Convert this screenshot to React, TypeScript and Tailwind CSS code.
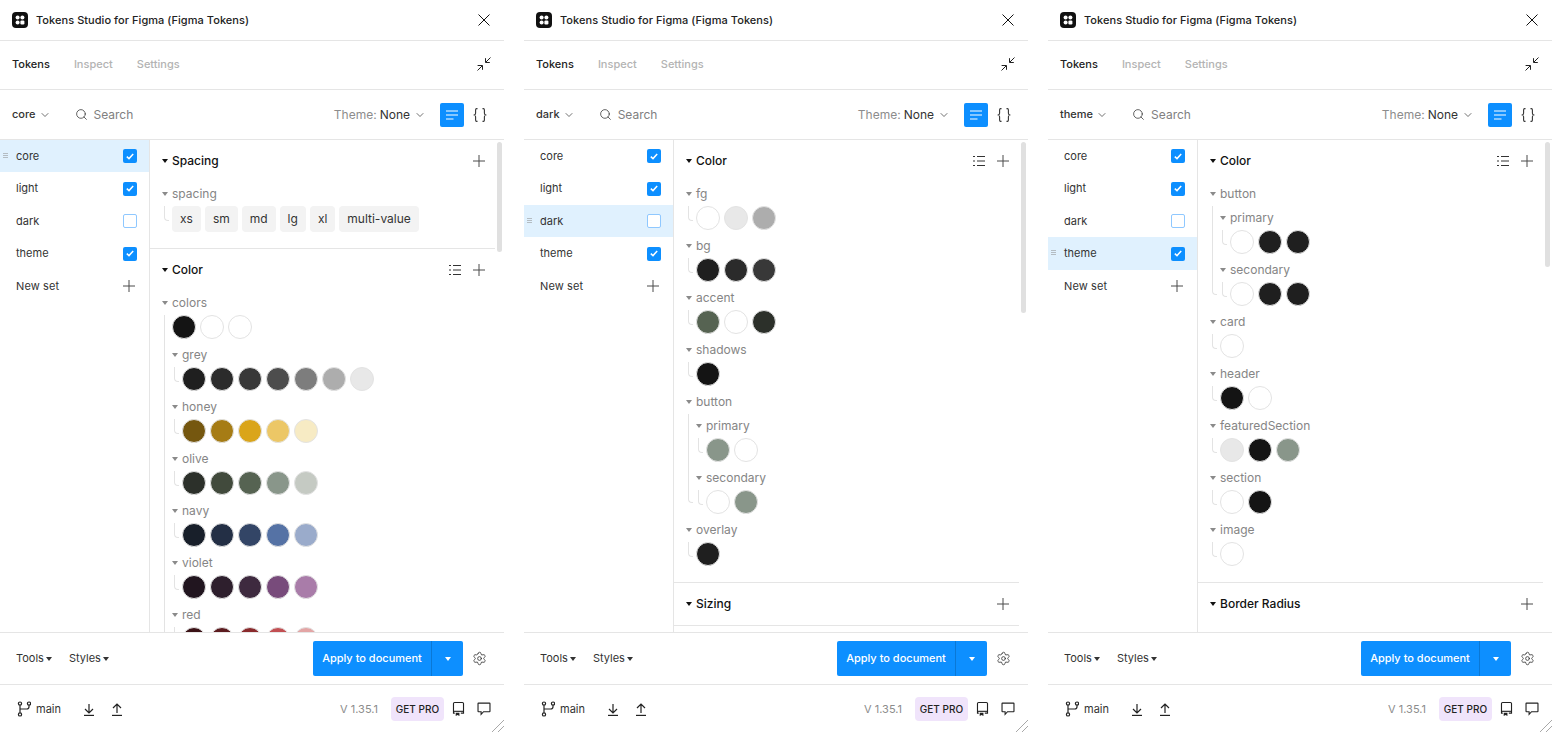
import { ChevronDown, Search, Settings } from "lucide-react"
import type { ReactNode } from "react"

const W = "#ffffff"
const BLACK = "#141414"
const G1 = "#1f1f1f"
const G2 = "#2b2b2b"
const G3 = "#383838"
const SAGE = "#89968a"

type Node = {
    name: string
    swatches?: string[]
    chips?: string[]
    groups?: Node[]
}

type Section = {
    title: string
    list?: boolean
    noBorder?: boolean
    groups?: Node[]
}

const coreSections: Section[] = [
    { title: "Spacing", groups: [{ name: "spacing", chips: ["xs", "sm", "md", "lg", "xl", "multi-value"] }] },
    {
        title: "Color",
        list: true,
        groups: [
            {
                name: "colors",
                swatches: [BLACK, W, W],
                groups: [
                    { name: "grey", swatches: [G1, G2, G3, "#4d4d4d", "#7d7d7d", "#adadad", "#e8e8e8"] },
                    { name: "honey", swatches: ["#75570f", "#a67c15", "#daa51a", "#ecc766", "#f7ebc4"] },
                    { name: "olive", swatches: ["#2c302a", "#414a3c", "#566352", SAGE, "#c5cac3"] },
                    { name: "navy", swatches: ["#181f2a", "#232f45", "#334566", "#5572a5", "#9aabcb"] },
                    { name: "violet", swatches: ["#21151f", "#2e1f2d", "#3e2a3f", "#784b7b", "#a97ca9"] },
                    { name: "red", swatches: ["#3b1216", "#5c1b1f", "#8a2a2c", "#c24f52", "#e3a5a5"] },
                ],
            },
        ],
    },
]

const darkSections: Section[] = [
    {
        title: "Color",
        list: true,
        groups: [
            { name: "fg", swatches: [W, "#e8e8e8", "#adadad"] },
            { name: "bg", swatches: [G1, G2, G3] },
            { name: "accent", swatches: ["#566352", W, "#2c302a"] },
            { name: "shadows", swatches: [BLACK] },
            {
                name: "button",
                groups: [
                    { name: "primary", swatches: [SAGE, W] },
                    { name: "secondary", swatches: [W, SAGE] },
                ],
            },
            { name: "overlay", swatches: [G1] },
        ],
    },
    { title: "Sizing" },
]

const themeSections: Section[] = [
    {
        title: "Color",
        list: true,
        groups: [
            {
                name: "button",
                groups: [
                    { name: "primary", swatches: [W, G1, G1] },
                    { name: "secondary", swatches: [W, G1, G1] },
                ],
            },
            { name: "card", swatches: [W] },
            { name: "header", swatches: [BLACK, W] },
            { name: "featuredSection", swatches: ["#e8e8e8", BLACK, SAGE] },
            { name: "section", swatches: [W, BLACK] },
            { name: "image", swatches: [W] },
        ],
    },
    { title: "Border Radius", noBorder: true },
]

function Caret({ className }: { className: string }) {
    return (
        <svg width="6" height="4" viewBox="0 0 6 4" className={className} fill="currentColor">
            <path d="M0 0h6L3 4z" />
        </svg>
    )
}

function PlusIcon() {
    return (
        <svg width="12" height="12" viewBox="0 0 12 12" className="shrink-0 text-[#4a4a4a]" stroke="currentColor" strokeWidth="1">
            <path d="M6 0v12M0 6h12" />
        </svg>
    )
}

function ListIcon() {
    return (
        <svg width="12" height="12" viewBox="0 0 12 12" className="shrink-0 text-[#333]" stroke="currentColor" strokeWidth="1">
            <path d="M0 1.5h2M4 1.5h8M0 6h2M4 6h8M0 10.5h2M4 10.5h8" />
        </svg>
    )
}

function LogoIcon() {
    return (
        <svg width="16" height="16" viewBox="0 0 16 16" className="shrink-0">
            <rect width="16" height="16" rx="4" fill="#111" />
            <circle cx="5.6" cy="5.6" r="2" fill="#fff" />
            <circle cx="10.4" cy="5.6" r="2" fill="#fff" />
            <circle cx="5.6" cy="10.4" r="2" fill="#fff" />
            <rect x="8.4" y="8.4" width="4" height="4" rx="1.2" fill="#fff" />
        </svg>
    )
}

function CompressIcon() {
    return (
        <svg width="16" height="16" viewBox="0 0 16 16" fill="none" stroke="#222" strokeWidth="1">
            <path d="M14.5 1.5 9.8 6.2M9.5 2.2v4.3h4.3" />
            <path d="M1.5 14.5 6.2 9.8M1.6 9.5h4.9v4.3" />
        </svg>
    )
}

function BracesIcon() {
    return (
        <svg width="14" height="14" viewBox="0 0 14 14" fill="none" stroke="#333" strokeWidth="1.1">
            <path d="M4.5 0.6H3.6C2.8 0.6 2.6 1.1 2.6 1.9v3.3C2.6 6.2 2 7 0.6 7c1.4 0 2 .8 2 1.8v3.3c0 .8.2 1.3 1 1.3h.9" />
            <path d="M9.5 0.6h.9c.8 0 1 .5 1 1.3v3.3c0 1 .6 1.8 2 1.8-1.4 0-2 .8-2 1.8v3.3c0 .8-.2 1.3-1 1.3h-.9" />
        </svg>
    )
}

function BranchIcon() {
    return (
        <svg width="14" height="16" viewBox="0 0 14 16" fill="none" stroke="#222" strokeWidth="1.2" className="shrink-0">
            <circle cx="3" cy="2.6" r="1.6" />
            <circle cx="12" cy="2.6" r="1.6" />
            <circle cx="3" cy="13.4" r="1.6" />
            <path d="M3 4.2v7.6" />
            <path d="M12 4.2v1.6c0 1.4-.9 2.2-2.2 2.2H3" />
        </svg>
    )
}

function ArrowBarIcon({ up }: { up?: boolean }) {
    return (
        <svg width="12" height="13" viewBox="0 0 12 13" fill="none" stroke="#222" strokeWidth="1.2">
            <path d={up ? "M6 10V1M2 5l4-4 4 4" : "M6 1v9M2 6l4 4 4-4"} />
            <path d="M1 12.4h10" />
        </svg>
    )
}

function BookIcon() {
    return (
        <svg width="13" height="16" viewBox="0 0 14 16" fill="none" stroke="#222" strokeWidth="1.2">
            <path d="M3 12.5H1.6V2.2c0-.7.5-1.2 1.2-1.2h8.4c.7 0 1.2.5 1.2 1.2v10.3H9.5" />
            <path d="M1.6 10.5h10.8" />
            <path d="M4 12h4v3.5l-2-1-2 1z" fill="#222" stroke="none" />
        </svg>
    )
}

function CommentIcon() {
    return (
        <svg width="14" height="14" viewBox="0 0 15 15" fill="none" stroke="#222" strokeWidth="1.2">
            <path d="M1.6 1.2h11.8c.3 0 .5.2.5.5v8.2c0 .3-.2.5-.5.5H7l-2.6 2.8v-2.8H1.6c-.3 0-.5-.2-.5-.5V1.7c0-.3.2-.5.5-.5z" />
        </svg>
    )
}

function Checkbox({ checked }: { checked: boolean }) {
    if (!checked) {
        return <span className="h-[14px] w-[14px] shrink-0 rounded-[2px] border border-[#8fc8ff] bg-white" />
    }
    return (
        <span className="flex h-[14px] w-[14px] shrink-0 items-center justify-center rounded-[2px] bg-[#0d8fff]">
            <svg width="8" height="7" viewBox="0 0 8 7" fill="none" stroke="#fff" strokeWidth="1.5">
                <path d="M0.8 3.6 3 5.6 7.2 1" />
            </svg>
        </span>
    )
}

function Swatch({ color }: { color: string }) {
    return <span className="h-6 w-6 rounded-full border border-[#e3e3e3]" style={{ backgroundColor: color }} />
}

function TreeGroup({ node }: { node: Node }) {
    const hasGroups = Boolean(node.groups?.length)
    return (
        <div>
            <div className="flex h-5 items-center text-[12px] text-[#858585]">
                <Caret className="mr-1 shrink-0 text-[#8a8a8a]" />
                <span>{node.name}</span>
            </div>
            <div className="mt-[2px] flex">
                {hasGroups ? (
                    <span className="mb-[11px] ml-[2px] w-[5px] shrink-0 rounded-bl-[4px] border-b border-l border-[#e3e3e3]" />
                ) : (
                    <span className="ml-[2px] h-[15px] w-[5px] shrink-0 rounded-bl-[4px] border-b border-l border-[#e3e3e3]" />
                )}
                <div className={`ml-[3px] flex flex-col gap-[6px] ${node.swatches || node.chips ? "" : "pt-[2px]"}`}>
                    {node.swatches ? (
                        <div className="flex gap-1">
                            {node.swatches.map((color, i) => (
                                <Swatch key={i} color={color} />
                            ))}
                        </div>
                    ) : null}
                    {node.chips ? (
                        <div className="flex gap-1">
                            {node.chips.map((chip) => (
                                <span key={chip} className="flex h-[26px] items-center rounded-[4px] bg-[#f3f3f3] px-2 text-[12px] text-[#333]">
                                    {chip}
                                </span>
                            ))}
                        </div>
                    ) : null}
                    {node.groups?.map((group) => (
                        <TreeGroup key={group.name} node={group} />
                    ))}
                </div>
            </div>
        </div>
    )
}

function TokenSection({ section }: { section: Section }) {
    return (
        <div className={section.noBorder ? "" : "border-b border-[#e5e5e5]"}>
            <div className="flex h-[42px] items-center justify-between pl-3 pr-[10px]">
                <div className="flex items-center text-[12px] font-medium text-[#111]">
                    <Caret className="mr-1 shrink-0 text-[#111]" />
                    <span>{section.title}</span>
                </div>
                <div className="flex items-center gap-3">
                    {section.list ? <ListIcon /> : null}
                    <PlusIcon />
                </div>
            </div>
            {section.groups ? (
                <div className="flex flex-col gap-[6px] pb-4 pl-3 pt-[2px]">
                    {section.groups.map((group) => (
                        <TreeGroup key={group.name} node={group} />
                    ))}
                </div>
            ) : null}
        </div>
    )
}

function SetRow({ name, active, checked, height }: { name: string; active: boolean; checked: boolean; height: string }) {
    return (
        <div className={`relative flex items-center justify-between pl-4 pr-3 ${height} ${active ? "bg-[#e0f1fe]" : ""}`}>
            {active ? (
                <span className="absolute left-[3px] top-[13px] flex w-[5px] flex-col gap-px">
                    <span className="h-px bg-[#b4bcc2]" />
                    <span className="h-px bg-[#b4bcc2]" />
                    <span className="h-px bg-[#b4bcc2]" />
                </span>
            ) : null}
            <span className="text-[11px] text-[#333]">{name}</span>
            <Checkbox checked={checked} />
        </div>
    )
}

function Row({ className, children }: { className: string; children: ReactNode }) {
    return <div className={`flex shrink-0 items-center border-b border-[#e5e5e5] ${className}`}>{children}</div>
}

function Panel({ active, sections, thumb }: { active: string; sections: Section[]; thumb: string }) {
    const sets = [
        { name: "core", checked: true, height: "h-[32px]" },
        { name: "light", checked: true, height: "h-[33px]" },
        { name: "dark", checked: false, height: "h-[32px]" },
        { name: "theme", checked: true, height: "h-[33px]" },
    ]
    return (
        <div className="relative flex h-[732px] w-[504px] shrink-0 flex-col bg-white">
            <Row className="h-[41px] justify-between pl-3 pr-[14px]">
                <div className="flex items-center gap-2">
                    <LogoIcon />
                    <span className="text-[11px] font-medium tracking-[0.05px] text-[#222]">Tokens Studio for Figma (Figma Tokens)</span>
                </div>
                <svg width="12" height="12" viewBox="0 0 12 12" stroke="#111" strokeWidth="1">
                    <path d="M0.5 0.5l11 11M11.5 0.5l-11 11" />
                </svg>
            </Row>
            <Row className="h-[49px] justify-between pb-[2px] pl-3 pr-3">
                <div className="flex items-center gap-6 text-[11px] font-medium text-[#b3b3b3]">
                    <span className="text-[#222]">Tokens</span>
                    <span>Inspect</span>
                    <span>Settings</span>
                </div>
                <CompressIcon />
            </Row>
            <Row className="h-[50px] justify-between pl-3 pr-3">
                <div className="flex items-center">
                    <span className="text-[11px] font-medium text-[#333]">{active}</span>
                    <ChevronDown className="ml-[3px] h-[12px] w-[12px] text-[#333]" strokeWidth={1.4} />
                    <Search className="ml-[24px] h-[13px] w-[13px] text-[#333]" strokeWidth={1.4} />
                    <span className="ml-[6px] text-[12px] text-[#808080]">Search</span>
                </div>
                <div className="flex items-center">
                    <span className="text-[12px] text-[#8c8c8c]">Theme:</span>
                    <span className="ml-[3px] text-[12px] text-[#333]">None</span>
                    <ChevronDown className="ml-[4px] h-[12px] w-[12px] text-[#333]" strokeWidth={1.4} />
                    <span className="ml-[14px] flex h-6 w-6 items-center justify-center rounded-[2px] bg-[#0d8fff]">
                        <svg width="12" height="10" viewBox="0 0 12 10" stroke="#fff" strokeWidth="1">
                            <path d="M0 1h12M0 5h12M0 9h7.5" />
                        </svg>
                    </span>
                    <span className="ml-1 flex h-6 w-6 items-center justify-center">
                        <BracesIcon />
                    </span>
                </div>
            </Row>
            <div className="flex h-[492px] shrink-0 overflow-hidden">
                <div className="w-[150px] shrink-0 border-r border-[#e5e5e5]">
                    {sets.map((set) => (
                        <SetRow key={set.name} name={set.name} checked={set.checked} height={set.height} active={set.name === active} />
                    ))}
                    <div className="flex h-[32px] items-center justify-between pl-4 pr-[14px]">
                        <span className="text-[11px] tracking-[0.1px] text-[#333]">New set</span>
                        <PlusIcon />
                    </div>
                </div>
                <div className="w-[345px] shrink-0">
                    {sections.map((section) => (
                        <TokenSection key={section.title} section={section} />
                    ))}
                </div>
                <div className="w-[9px] shrink-0 pl-[2px] pt-[2px]">
                    <div className={`w-[5px] rounded-full bg-[#e0e0e0] ${thumb}`} />
                </div>
            </div>
            <div className="flex h-[53px] shrink-0 items-center justify-between border-y border-[#e5e5e5] pl-4 pr-[17px]">
                <div className="flex items-center text-[11px] text-[#333]">
                    <span>Tools</span>
                    <Caret className="ml-[2px] shrink-0 text-[#333]" />
                    <span className="ml-[17px]">Styles</span>
                    <Caret className="ml-[2px] shrink-0 text-[#333]" />
                </div>
                <div className="flex items-center">
                    <div className="flex h-[35px] items-center rounded-[2px] bg-[#0d8fff] text-[11px] font-medium text-white">
                        <span className="flex h-full w-[119px] items-center justify-center border-r border-[#0a78d6]">Apply to document</span>
                        <span className="flex h-full w-[31px] items-center justify-center">
                            <Caret className="text-white" />
                        </span>
                    </div>
                    <Settings className="ml-[9px] h-[15px] w-[15px] text-[#333]" strokeWidth={1.3} />
                </div>
            </div>
            <div className="flex h-[47px] shrink-0 items-center justify-between pl-[17px] pr-[13px] pt-[1px]">
                <div className="flex items-center">
                    <BranchIcon />
                    <span className="ml-[5px] text-[11px] text-[#333]">main</span>
                    <span className="ml-[22px] flex">
                        <ArrowBarIcon />
                    </span>
                    <span className="ml-[16px] flex">
                        <ArrowBarIcon up />
                    </span>
                </div>
                <div className="flex items-center">
                    <span className="text-[11px] text-[#8c8c8c]">V 1.35.1</span>
                    <span className="ml-[13px] flex h-6 w-[53px] items-center justify-center rounded-[4px] bg-[#f0e4fb] text-[10px] font-medium text-[#222]">
                        GET PRO
                    </span>
                    <span className="ml-[8px] flex">
                        <BookIcon />
                    </span>
                    <span className="ml-[12px] flex">
                        <CommentIcon />
                    </span>
                </div>
            </div>
            <svg width="12" height="12" viewBox="0 0 12 12" className="absolute bottom-0 right-0" stroke="#a8a8a8" strokeWidth="1">
                <path d="M0 12 12 0M6 12l6-6" />
            </svg>
        </div>
    )
}

export default function App() {
    return (
        <div className="flex h-[732px] w-[1552px] gap-5 overflow-hidden bg-white font-['Inter',sans-serif]">
            <Panel active="core" sections={coreSections} thumb="h-[110px]" />
            <Panel active="dark" sections={darkSections} thumb="h-[171px]" />
            <Panel active="theme" sections={themeSections} thumb="h-[125px]" />
        </div>
    )
}
